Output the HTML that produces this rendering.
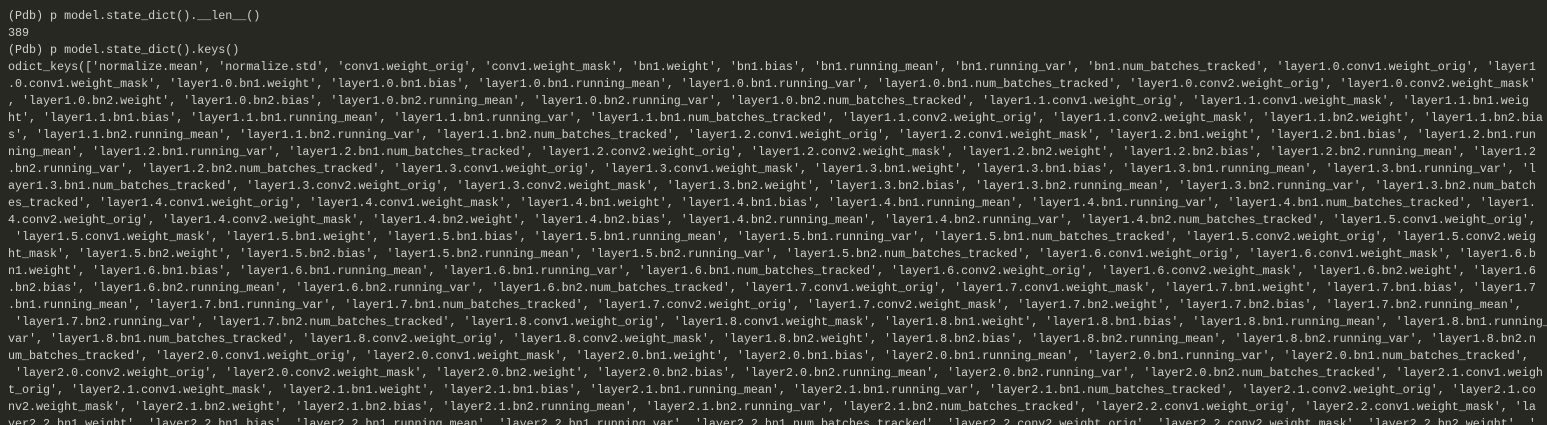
<!DOCTYPE html>
<html><head><meta charset="utf-8"><style>
html,body{margin:0;padding:0;background:#272822;overflow:hidden;width:1547px;height:425px}
pre{margin:0;padding:8px 0 0 8px;font-family:"Liberation Mono",monospace;font-size:11.72px;letter-spacing:-0.024px;line-height:17px;color:#d0d0cc;height:417px;overflow:hidden;white-space:pre}
</style></head><body><pre>(Pdb) p model.state_dict().__len__()
389
(Pdb) p model.state_dict().keys()
odict_keys(['normalize.mean', 'normalize.std', 'conv1.weight_orig', 'conv1.weight_mask', 'bn1.weight', 'bn1.bias', 'bn1.running_mean', 'bn1.running_var', 'bn1.num_batches_tracked', 'layer1.0.conv1.weight_orig', 'layer1
.0.conv1.weight_mask', 'layer1.0.bn1.weight', 'layer1.0.bn1.bias', 'layer1.0.bn1.running_mean', 'layer1.0.bn1.running_var', 'layer1.0.bn1.num_batches_tracked', 'layer1.0.conv2.weight_orig', 'layer1.0.conv2.weight_mask'
, 'layer1.0.bn2.weight', 'layer1.0.bn2.bias', 'layer1.0.bn2.running_mean', 'layer1.0.bn2.running_var', 'layer1.0.bn2.num_batches_tracked', 'layer1.1.conv1.weight_orig', 'layer1.1.conv1.weight_mask', 'layer1.1.bn1.weig
ht', 'layer1.1.bn1.bias', 'layer1.1.bn1.running_mean', 'layer1.1.bn1.running_var', 'layer1.1.bn1.num_batches_tracked', 'layer1.1.conv2.weight_orig', 'layer1.1.conv2.weight_mask', 'layer1.1.bn2.weight', 'layer1.1.bn2.bia
s', 'layer1.1.bn2.running_mean', 'layer1.1.bn2.running_var', 'layer1.1.bn2.num_batches_tracked', 'layer1.2.conv1.weight_orig', 'layer1.2.conv1.weight_mask', 'layer1.2.bn1.weight', 'layer1.2.bn1.bias', 'layer1.2.bn1.run
ning_mean', 'layer1.2.bn1.running_var', 'layer1.2.bn1.num_batches_tracked', 'layer1.2.conv2.weight_orig', 'layer1.2.conv2.weight_mask', 'layer1.2.bn2.weight', 'layer1.2.bn2.bias', 'layer1.2.bn2.running_mean', 'layer1.2
.bn2.running_var', 'layer1.2.bn2.num_batches_tracked', 'layer1.3.conv1.weight_orig', 'layer1.3.conv1.weight_mask', 'layer1.3.bn1.weight', 'layer1.3.bn1.bias', 'layer1.3.bn1.running_mean', 'layer1.3.bn1.running_var', 'l
ayer1.3.bn1.num_batches_tracked', 'layer1.3.conv2.weight_orig', 'layer1.3.conv2.weight_mask', 'layer1.3.bn2.weight', 'layer1.3.bn2.bias', 'layer1.3.bn2.running_mean', 'layer1.3.bn2.running_var', 'layer1.3.bn2.num_batch
es_tracked', 'layer1.4.conv1.weight_orig', 'layer1.4.conv1.weight_mask', 'layer1.4.bn1.weight', 'layer1.4.bn1.bias', 'layer1.4.bn1.running_mean', 'layer1.4.bn1.running_var', 'layer1.4.bn1.num_batches_tracked', 'layer1.
4.conv2.weight_orig', 'layer1.4.conv2.weight_mask', 'layer1.4.bn2.weight', 'layer1.4.bn2.bias', 'layer1.4.bn2.running_mean', 'layer1.4.bn2.running_var', 'layer1.4.bn2.num_batches_tracked', 'layer1.5.conv1.weight_orig',
 'layer1.5.conv1.weight_mask', 'layer1.5.bn1.weight', 'layer1.5.bn1.bias', 'layer1.5.bn1.running_mean', 'layer1.5.bn1.running_var', 'layer1.5.bn1.num_batches_tracked', 'layer1.5.conv2.weight_orig', 'layer1.5.conv2.weig
ht_mask', 'layer1.5.bn2.weight', 'layer1.5.bn2.bias', 'layer1.5.bn2.running_mean', 'layer1.5.bn2.running_var', 'layer1.5.bn2.num_batches_tracked', 'layer1.6.conv1.weight_orig', 'layer1.6.conv1.weight_mask', 'layer1.6.b
n1.weight', 'layer1.6.bn1.bias', 'layer1.6.bn1.running_mean', 'layer1.6.bn1.running_var', 'layer1.6.bn1.num_batches_tracked', 'layer1.6.conv2.weight_orig', 'layer1.6.conv2.weight_mask', 'layer1.6.bn2.weight', 'layer1.6
.bn2.bias', 'layer1.6.bn2.running_mean', 'layer1.6.bn2.running_var', 'layer1.6.bn2.num_batches_tracked', 'layer1.7.conv1.weight_orig', 'layer1.7.conv1.weight_mask', 'layer1.7.bn1.weight', 'layer1.7.bn1.bias', 'layer1.7
.bn1.running_mean', 'layer1.7.bn1.running_var', 'layer1.7.bn1.num_batches_tracked', 'layer1.7.conv2.weight_orig', 'layer1.7.conv2.weight_mask', 'layer1.7.bn2.weight', 'layer1.7.bn2.bias', 'layer1.7.bn2.running_mean',
 'layer1.7.bn2.running_var', 'layer1.7.bn2.num_batches_tracked', 'layer1.8.conv1.weight_orig', 'layer1.8.conv1.weight_mask', 'layer1.8.bn1.weight', 'layer1.8.bn1.bias', 'layer1.8.bn1.running_mean', 'layer1.8.bn1.running_
var', 'layer1.8.bn1.num_batches_tracked', 'layer1.8.conv2.weight_orig', 'layer1.8.conv2.weight_mask', 'layer1.8.bn2.weight', 'layer1.8.bn2.bias', 'layer1.8.bn2.running_mean', 'layer1.8.bn2.running_var', 'layer1.8.bn2.n
um_batches_tracked', 'layer2.0.conv1.weight_orig', 'layer2.0.conv1.weight_mask', 'layer2.0.bn1.weight', 'layer2.0.bn1.bias', 'layer2.0.bn1.running_mean', 'layer2.0.bn1.running_var', 'layer2.0.bn1.num_batches_tracked',
 'layer2.0.conv2.weight_orig', 'layer2.0.conv2.weight_mask', 'layer2.0.bn2.weight', 'layer2.0.bn2.bias', 'layer2.0.bn2.running_mean', 'layer2.0.bn2.running_var', 'layer2.0.bn2.num_batches_tracked', 'layer2.1.conv1.weigh
t_orig', 'layer2.1.conv1.weight_mask', 'layer2.1.bn1.weight', 'layer2.1.bn1.bias', 'layer2.1.bn1.running_mean', 'layer2.1.bn1.running_var', 'layer2.1.bn1.num_batches_tracked', 'layer2.1.conv2.weight_orig', 'layer2.1.co
nv2.weight_mask', 'layer2.1.bn2.weight', 'layer2.1.bn2.bias', 'layer2.1.bn2.running_mean', 'layer2.1.bn2.running_var', 'layer2.1.bn2.num_batches_tracked', 'layer2.2.conv1.weight_orig', 'layer2.2.conv1.weight_mask', 'la
yer2.2.bn1.weight', 'layer2.2.bn1.bias', 'layer2.2.bn1.running_mean', 'layer2.2.bn1.running_var', 'layer2.2.bn1.num_batches_tracked', 'layer2.2.conv2.weight_orig', 'layer2.2.conv2.weight_mask', 'layer2.2.bn2.weight', '</pre></body></html>
